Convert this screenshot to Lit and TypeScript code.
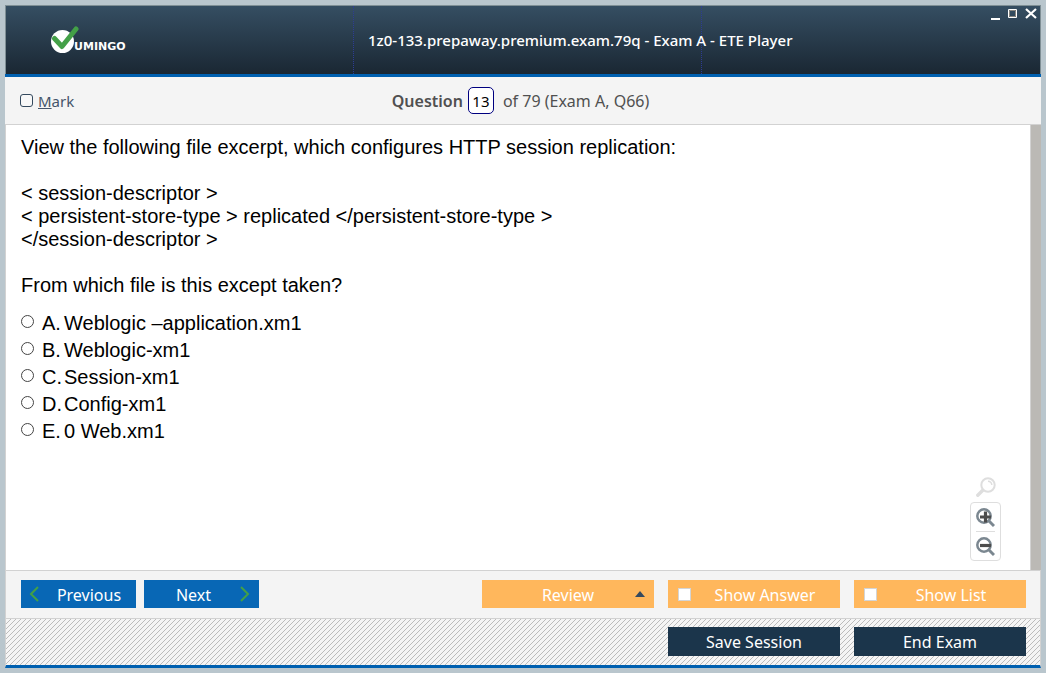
import { LitElement, html, css, svg } from "lit";
import { customElement, state } from "lit/decorators.js";

const ANSWERS = [
  { letter: "A.", text: "Weblogic –application.xm1" },
  { letter: "B.", text: "Weblogic-xm1" },
  { letter: "C.", text: "Session-xm1" },
  { letter: "D.", text: "Config-xm1" },
  { letter: "E.", text: "0 Web.xm1" },
];

@customElement("player-header")
class PlayerHeader extends LitElement {
  static styles = css`
    :host { display: block; }
    .bar {
      display: grid;
      grid-template-columns: 348fr 348fr 338fr;
      height: 68px;
      border: 1px solid #7f8f95;
      border-bottom: 0;
      background: linear-gradient(#354e62, #1a2733);
      color: #fff;
    }
    .cell { display: flex; align-items: center; border-right: 1px dotted #2d3c94; min-width: 0; }
    .brand { padding-left: 45px; }
    .logo { display: block; }
    .word { fill: #fff; font: bold 11px "DejaVu Sans", sans-serif; }
    .title {
      margin: 0; padding-left: 14px; white-space: nowrap; z-index: 1;
      font: 500 15px/22px "Noto Sans", sans-serif;
    }
    .controls { display: flex; justify-content: flex-end; align-items: flex-start; gap: 4px; padding: 2px 2px 0 0; }
    .control { display: block; width: 14px; height: 13px; padding: 0; border: 0; background: none; }
    .control svg { display: block; }
  `;
  render() {
    return html`
      <header class="bar">
        <div class="cell brand">
          <svg class="logo" width="82" height="28" viewBox="0 0 82 28" role="img" aria-label="Vumingo">
            <circle cx="11.5" cy="15.500" r="11.5" fill="#fff" />
            <path d="M3.500 12.500 11 20.500 25 3" fill="none" stroke="#43a047" stroke-width="5" stroke-linecap="round" stroke-linejoin="round" />
            <text class="word" x="23" y="24">UMINGO</text>
          </svg>
        </div>
        <div class="cell"><h1 class="title">1z0-133.prepaway.premium.exam.79q - Exam A - ETE Player</h1></div>
        <div class="controls">
          <button class="control" aria-label="Minimize"><svg width="14" height="13"><path d="M3 10h9v2H3z" fill="#fff" /></svg></button>
          <button class="control" aria-label="Maximize"><svg width="14" height="13"><path d="M2.5 1.5h8v8h-8z" fill="none" stroke="#fff" /><path d="M3.5 2.5h6v6h-6z" fill="none" stroke="#8a8680" /></svg></button>
          <button class="control" aria-label="Close"><svg width="14" height="13"><path d="M2 1l10 9M12 1l-10 9" stroke="#fff" stroke-width="2.200" /></svg></button>
        </div>
      </header>
    `;
  }
}

@customElement("app-root")
class AppRoot extends LitElement {
  @state() private selected = "";

  static styles = css`
    :host {
      display: flex;
      flex-direction: column;
      box-sizing: border-box;
      min-height: 100vh;
      padding: 5px;
      background: #b9c6cd;
    }
    .window { flex: 1; display: flex; flex-direction: column; }
    .strip {
      display: grid; grid-template-columns: 1fr auto 1fr; align-items: center;
      box-sizing: border-box; height: 51px; padding: 0 20px 0 15px;
      border-top: 3px solid #0060b0; border-bottom: 1px solid #d2d2d2;
      background: #f4f4f4; color: #505050;
      font: 16px/22px "Noto Sans", sans-serif;
    }
    .mark { display: flex; align-items: center; gap: 5px; padding-top: 1px; font-size: 15px; color: #44546a; }
    .mark input {
      appearance: none; width: 13px; height: 13px; margin: 0 0 1px;
      border: 1px solid #34495e; border-radius: 3px; background: #f8f8f8;
      box-sizing: border-box;
    }
    .counter { display: flex; align-items: center; }
    .counter label { font-weight: 600; }
    .number {
      box-sizing: border-box; width: 26px; height: 27px; margin: 0 9px 0 5px; padding: 0;
      border: 1px solid #000080; border-radius: 5px; background: #fff; color: #000;
      text-align: center; font: 15px/22px "Noto Sans", sans-serif;
    }
    .body { flex: 1; display: flex; background: #fff; border-left: 1px solid #d2d2d2; }
    .content {
      flex: 1; position: relative; padding: 11px 15px;
      color: #000; font: 20px/23px "Liberation Sans", Arial, sans-serif;
    }
    .scroll { width: 10px; background: #bbb9b5; border-left: 1px solid #d2d2d2; }
    .text { margin: 0 0 23px; }
    .answers { margin: -10px 0 0; padding: 0; border: 0; }
    .answer { display: grid; grid-template-columns: 14px 22px 1fr; height: 27px; align-items: center; }
    .answer input {
      appearance: none; box-sizing: border-box; width: 13px; height: 13px; margin: 0 0 4px;
      border: 1px solid #444; border-radius: 50%; background: #fff;
    }
    .answer input:checked { background: radial-gradient(#222 40%, #fff 45%); }
    .answer label { display: contents; }
    .letter, .option { padding-left: 7px; }
    .zoom {
      position: absolute; right: 29px; bottom: 9px;
      display: flex; flex-direction: column; align-items: center; gap: 4px;
    }
    .zoom button { display: block; padding: 0; border: 0; background: none; }
    .zoom svg { display: block; }
    .pair {
      display: flex; flex-direction: column; padding: 0 5px;
      border: 1px solid #dedede; border-radius: 4px; background: #fff;
    }
    .pair button { padding: 5px 0 3px; }
    .pair button + button { border-top: 1px solid #dedede; }
    .actions, .session {
      display: flex; align-items: flex-start; box-sizing: border-box; height: 49px;
      border: 1px solid #d2d2d2;
    }
    .actions { gap: 8px; padding: 9px 14px 0 15px; background: #f4f4f4; }
    .session {
      gap: 14px; justify-content: flex-end; padding: 8px 14px 0 15px;
      border-top: 0; border-bottom: 3px solid #0060b0;
      background: #f5f5f5 url("data:image/svg+xml,%3Csvg xmlns='http://www.w3.org/2000/svg' width='5' height='5' shape-rendering='crispEdges'%3E%3Cpath d='M0 4h1v1H0zM1 3h1v1H1zM2 2h1v1H2zM3 1h1v1H3zM4 0h1v1H4z' fill='%23bcbcbc'/%3E%3C/svg%3E");
    }
    .right { display: flex; gap: 14px; margin-left: auto; }
    .btn {
      display: grid; grid-template-columns: 28px 1fr 28px; align-items: center; justify-items: center;
      box-sizing: border-box; height: 28px; padding: 0; border: 0; color: #fff;
      font: 16px/22px "Noto Sans", sans-serif;
    }
    .btn span { padding-top: 2px; }
    .nav { width: 115px; background: #0867b5; }
    .prev { grid-template-columns: 26px 1fr; padding-right: 5px; }
    .next { grid-template-columns: 1fr 28px; }
    .next span { padding-left: 12px; }
    .amber { width: 172px; background: #ffb75c; }
    .check { grid-template-columns: 32px 1fr; }
    .check span { padding-right: 10px; }
    .check input { appearance: none; box-sizing: border-box; width: 13px; height: 13px; margin: 0; border: 1px solid #d4d4d4; background: #fff; }
    .dark { display: block; width: 172px; height: 29px; padding-top: 1px; background: #1b354b; }
  `;

  private magnifier(sign: string) {
    return svg`
      <path d="M12.5 12.5 18 18" stroke="#7b8790" stroke-width="3" />
      <circle cx="8" cy="8" r="6.7" fill="#fff" stroke="#7b8790" stroke-width="2.5" />
      <path d=${sign} stroke="#4c4c4c" stroke-width="3.2" />`;
  }

  render() {
    return html`
      <main class="window">
        <player-header></player-header>
        <section class="strip">
          <label class="mark"><input type="checkbox" /><span><u>M</u>ark</span></label>
          <div class="counter">
            <label for="number">Question</label>
            <input class="number" id="number" value="13" />
            <span>of 79 (Exam A, Q66)</span>
          </div>
        </section>
        <section class="body">
          <div class="content">
            <p class="text">View the following file excerpt, which configures HTTP session replication:</p>
            <p class="text">&lt; session-descriptor &gt;<br />&lt; persistent-store-type &gt; replicated &lt;/persistent-store-type &gt;<br />&lt;/session-descriptor &gt;</p>
            <p class="text">From which file is this except taken?</p>
            <fieldset class="answers" aria-label="Answers">
              ${ANSWERS.map((a) => html`
                <div class="answer">
                  <input type="radio" name="answer" id=${a.letter} .checked=${this.selected === a.letter}
                    @change=${() => (this.selected = a.letter)} />
                  <label for=${a.letter}><span class="letter">${a.letter}</span><span class="option">${a.text}</span></label>
                </div>`)}
            </fieldset>
            <div class="zoom">
              <button aria-label="Reset zoom"><svg width="20" height="21" viewBox="0 0 20 21">
                <path d="M7 13 1.800 18.200" stroke="#dedede" stroke-width="3.4" stroke-linecap="round" />
                <circle cx="12" cy="8" r="6.7" fill="#fff" stroke="#dedede" stroke-width="2" />
                <path d="M12 4.2a3.8 3.8 0 0 1 3.8 3.8" fill="none" stroke="#dedede" stroke-width="1.5" />
              </svg></button>
              <div class="pair">
                <button aria-label="Zoom in"><svg width="19" height="20" viewBox="0 0 19 20">${this.magnifier("M4 9h11M9.500 3.500v11")}</svg></button>
                <button aria-label="Zoom out"><svg width="19" height="20" viewBox="0 0 19 20">${this.magnifier("M4 8.500h11")}</svg></button>
              </div>
            </div>
          </div>
          <div class="scroll"></div>
        </section>
        <section class="actions">
          <button class="btn nav prev"><svg width="10" height="16"><path d="M9 1 2 8l7 7" fill="none" stroke="#43a047" stroke-width="2" /></svg><span>Previous</span></button>
          <button class="btn nav next"><span>Next</span><svg width="10" height="16"><path d="M1 1l7 7-7 7" fill="none" stroke="#43a047" stroke-width="2" /></svg></button>
          <div class="right">
            <button class="btn amber"><i></i><span>Review</span><svg width="10" height="6"><path d="M0 6 5 0l5 6z" fill="#34495e" /></svg></button>
            <label class="btn amber check"><input type="checkbox" /><span>Show Answer</span></label>
            <label class="btn amber check"><input type="checkbox" /><span>Show List</span></label>
          </div>
        </section>
        <section class="session">
          <button class="btn dark">Save Session</button>
          <button class="btn dark">End Exam</button>
        </section>
      </main>
    `;
  }
}
